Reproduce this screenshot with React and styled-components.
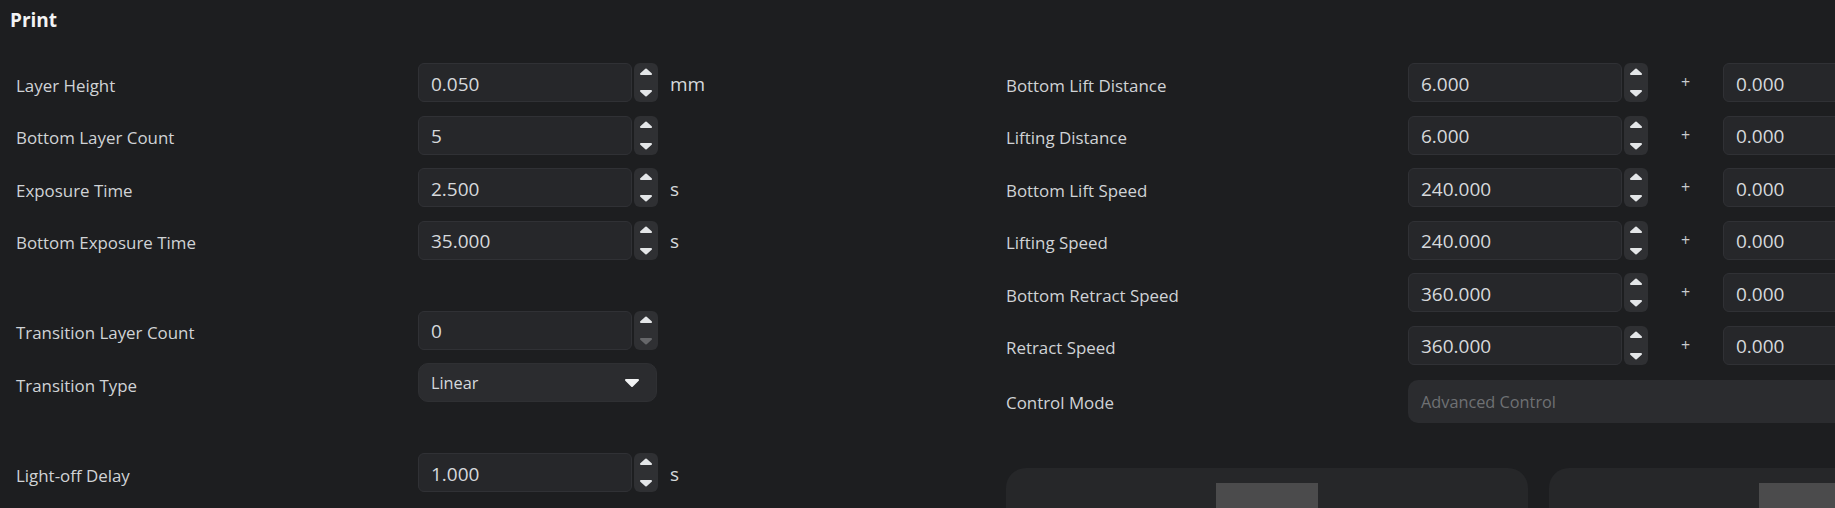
import React from "react";
import styled, { createGlobalStyle } from "styled-components";

const Global = createGlobalStyle`
  html, body { margin: 0; padding: 0; background: #1d1e20; overflow: hidden; }
  body { font-family: "Open Sans", "Noto Sans", sans-serif; color: #d3d6d9; }
`;

const Page = styled.div`
  width: 1835px;
  height: 508px;
  overflow: hidden;
  background: #1d1e20;
`;

const Title = styled.h1`
  margin: 0;
  padding: 7px 0 0 10px;
  font-size: 19px;
  line-height: 26px;
  font-weight: 700;
  color: #f2f3f4;
`;

const Columns = styled.div`
  display: flex;
  margin-top: 30px;
  width: max-content;
`;

const Column = styled.div`
  display: flex;
  flex-direction: column;
  gap: 13.6px;
  flex-shrink: 0;
  width: ${(p) => p.$width || "auto"};
  padding-left: ${(p) => p.$pad || "0"};
  box-sizing: border-box;
`;

const Row = styled.div`
  display: flex;
  align-items: center;
  height: ${(p) => p.$h || "39px"};
  margin-top: ${(p) => p.$mt || "0"};
`;

const Label = styled.div`
  width: 402px;
  flex-shrink: 0;
  padding-top: ${(p) => p.$pt || "5px"};
  font-size: 16.9px;
  color: #d0d3d6;
  white-space: nowrap;
`;

const Spacer = styled.div`
  height: 23.8px;
`;

const Input = styled.div`
  width: 214px;
  height: 39px;
  flex-shrink: 0;
  box-sizing: border-box;
  border: 1px solid #303135;
  border-radius: 6px;
  background: #26272a;
  padding: 2px 0 0 12px;
  display: flex;
  align-items: center;
  font-size: 19px;
  color: #d6d9dc;
`;

const SpinBox = styled.div`
  width: 24px;
  height: 39px;
  margin-left: 2px;
  flex-shrink: 0;
  border-radius: 6px;
  background: #2f3033;
  display: flex;
`;

const Unit = styled.div`
  margin-left: 12px;
  padding-top: 2px;
  font-size: 19px;
  color: #d6d9dc;
`;

const Plus = styled.div`
  width: 75px;
  flex-shrink: 0;
  text-align: center;
  font-size: 16px;
  color: #c9cbce;
  margin-top: -1px;
`;

const Dropdown = styled.div`
  width: 239px;
  height: 39px;
  box-sizing: border-box;
  border-radius: 10px;
  background: #2b2c2f;
  border: 1px solid #2f3033;
  padding: 1px 16px 0 12px;
  display: flex;
  align-items: center;
  justify-content: space-between;
  font-size: 16.3px;
  color: #d6d9dc;
`;

const ModeBox = styled.div`
  width: 555px;
  height: 43px;
  flex-shrink: 0;
  box-sizing: border-box;
  border-radius: 10px;
  background: #2b2c2f;
  padding: 1px 0 0 13px;
  display: flex;
  align-items: center;
  font-size: 16.3px;
  color: #6f7174;
`;

const Cards = styled.div`
  display: flex;
  gap: 21px;
  margin-top: 32px;
`;

const Card = styled.div`
  width: 522px;
  height: 260px;
  flex-shrink: 0;
  border-radius: 20px;
  background: #262729;
  display: flex;
  justify-content: center;
  padding-top: 15px;
  box-sizing: border-box;
`;

const Thumb = styled.div`
  width: 102px;
  height: 120px;
  background: #4b4b4c;
`;

function Spinner({ downDisabled }) {
  return (
    <SpinBox>
      <svg width="24" height="39" viewBox="0 0 24 39">
        <polygon
          points="7,11 12,6.5 17,11"
          fill="#e4e6e8"
          stroke="#e4e6e8"
          strokeWidth="2"
          strokeLinejoin="round"
        />
        <polygon
          points="7,28 17,28 12,32.5"
          fill={downDisabled ? "#66676a" : "#e4e6e8"}
          stroke={downDisabled ? "#66676a" : "#e4e6e8"}
          strokeWidth="2"
          strokeLinejoin="round"
        />
      </svg>
    </SpinBox>
  );
}

function NumField({ label, value, unit, downDisabled }) {
  return (
    <Row>
      <Label>{label}</Label>
      <Input>{value}</Input>
      <Spinner downDisabled={downDisabled} />
      {unit && <Unit>{unit}</Unit>}
    </Row>
  );
}

function PairField({ label, value, extra }) {
  return (
    <Row>
      <Label>{label}</Label>
      <Input>{value}</Input>
      <Spinner />
      <Plus>+</Plus>
      <Input>{extra}</Input>
      <Spinner />
    </Row>
  );
}

const rightRows = [
  ["Bottom Lift Distance", "6.000"],
  ["Lifting Distance", "6.000"],
  ["Bottom Lift Speed", "240.000"],
  ["Lifting Speed", "240.000"],
  ["Bottom Retract Speed", "360.000"],
  ["Retract Speed", "360.000"],
];

export default function App() {
  return (
    <Page>
      <Global />
      <Title>Print</Title>
      <Columns>
        <Column $width="1006px" $pad="16px">
          <NumField label="Layer Height" value="0.050" unit="mm" />
          <NumField label="Bottom Layer Count" value="5" />
          <NumField label="Exposure Time" value="2.500" unit="s" />
          <NumField label="Bottom Exposure Time" value="35.000" unit="s" />
          <Spacer />
          <NumField label="Transition Layer Count" value="0" downDisabled />
          <Row>
            <Label>Transition Type</Label>
            <Dropdown>
              <span>Linear</span>
              <svg width="16" height="10" viewBox="0 0 16 10">
                <polygon
                  points="2,2 14,2 8,8"
                  fill="#f2f3f4"
                  stroke="#f2f3f4"
                  strokeWidth="2"
                  strokeLinejoin="round"
                />
              </svg>
            </Dropdown>
          </Row>
          <Spacer />
          <NumField label="Light-off Delay" value="1.000" unit="s" />
        </Column>
        <Column>
          {rightRows.map(([l, v]) => (
            <PairField key={l} label={l} value={v} extra="0.000" />
          ))}
          <Row $h="43px" $mt="1px">
            <Label $pt="2px">Control Mode</Label>
            <ModeBox>Advanced Control</ModeBox>
          </Row>
          <Cards>
            <Card>
              <Thumb />
            </Card>
            <Card>
              <Thumb />
            </Card>
          </Cards>
        </Column>
      </Columns>
    </Page>
  );
}
